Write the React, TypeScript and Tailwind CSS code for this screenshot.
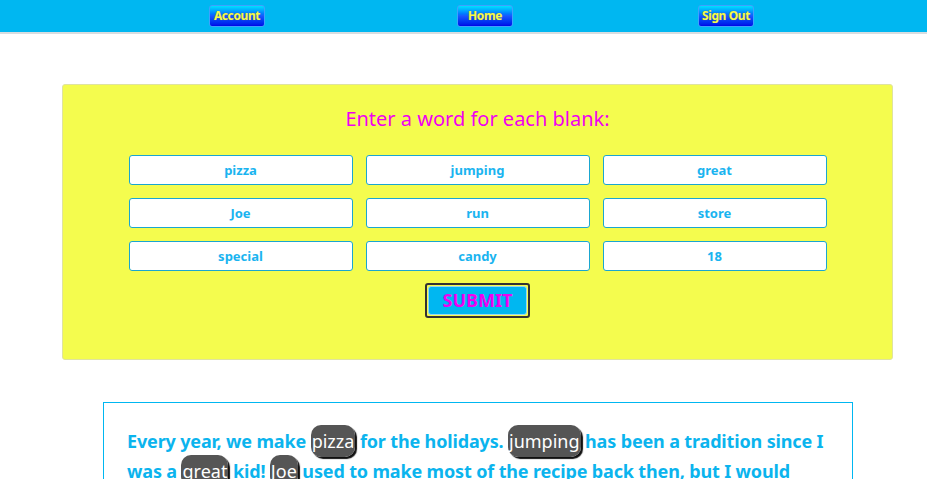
import React from "react";

const font = { fontFamily: '"Noto Sans", "Open Sans", sans-serif' };

const words = ["pizza", "jumping", "great", "Joe", "run", "store", "special", "candy", "18"];

function NavBtn({ label }: { label: string }) {
  return (
    <button
      className="h-[22px] w-[56px] whitespace-nowrap rounded-[3px] border border-[#3fa0ff] text-[12px] font-bold tracking-[-0.4px] text-[#f4fc4e] leading-none bg-gradient-to-b from-[#00e0ff] via-[#1a55ff] to-[#0000e8] [text-shadow:0_0_1px_#666]"
      style={font}
    >
      {label}
    </button>
  );
}

function Pill({ children }: { children: React.ReactNode }) {
  return (
    <span className="bg-[#555555] text-white font-normal tracking-normal rounded-[10px] px-[1px] py-[4px] shadow-[2px_2px_1px_#111]">
      {children}
    </span>
  );
}

export default function App() {
  return (
    <div className="min-h-[479px] bg-white" style={font}>
      <nav className="h-[34px] bg-[#00b7f1] border-b-2 border-[#d8dde0] flex items-center">
        <div className="w-[209px]" />
        <NavBtn label="Account" />
        <div className="w-[192px]" />
        <NavBtn label="Home" />
        <div className="w-[185px]" />
        <NavBtn label="Sign Out" />
      </nav>

      <div className="pt-[50px] px-[62px] pr-[34px]">
        <div className="bg-[#f4fc4e] border border-[#dfe3a0] rounded-[3px] h-[276px] flex flex-col items-center pt-[20px]">
          <h2 className="text-[20px] text-[#f000f0] leading-[28px]">Enter a word for each blank:</h2>
          <div className="grid grid-cols-[224px_224px_224px] gap-[13px] mt-[22px]">
            {words.map((w) => (
              <input
                key={w}
                defaultValue={w}
                className="h-[30px] w-[224px] bg-white border-[1.5px] border-[#1aa6d0] rounded-[3px] text-center text-[13px] font-bold text-[#1ab4f0] outline-none"
                style={font}
              />
            ))}
          </div>
          <button className="mt-[12px] w-[105px] h-[35px] rounded-[3px] border-2 border-[#333] p-[1px] bg-[#f4fc4e]">
            <span className="flex items-center justify-center w-full h-full rounded-[3px] bg-[#00b7f1] border border-[#9ad7f0] text-[18px] font-bold text-[#f000f0]" style={font}>
              SUBMIT
            </span>
          </button>
        </div>
      </div>

      <div className="pt-[42px] pl-[103px] pr-[74px]">
        <div className="border border-[#00b7f1] pl-[23px] pr-[26px] pt-[23px] pb-[20px]">
          <p className="text-[18px] font-bold text-[#0bb4ee] leading-[30px] tracking-[-0.15px]">
            Every year, we make <Pill>pizza</Pill> for the holidays. <Pill>jumping</Pill> has been a tradition since I was a{" "}
            <Pill>great</Pill> kid! <Pill>Joe</Pill> used to make most of the recipe back then, but I would <Pill>run</Pill> to the{" "}
            <Pill>store</Pill> to buy the <Pill>special</Pill> ingredients and some <Pill>candy</Pill>. Now that I am{" "}
            <Pill>18</Pill>, I make it myself!
          </p>
        </div>
      </div>
    </div>
  );
}
